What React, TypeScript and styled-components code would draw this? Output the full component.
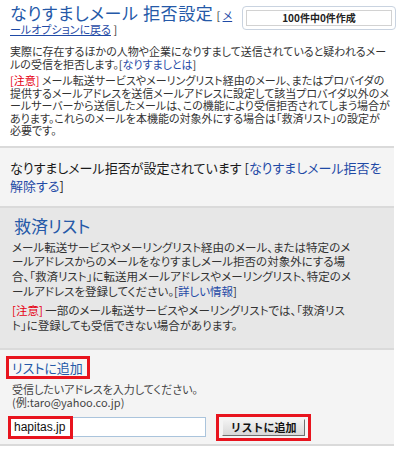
import React from 'react'
import styled, { createGlobalStyle } from 'styled-components'

const GlobalStyle = createGlobalStyle`
  body {
    margin: 0;
    background: #ffffff;
    font-family: "Noto Sans CJK JP", "Liberation Sans", sans-serif;
    font-feature-settings: "palt";
    color: #333333;
  }
`

const Page = styled.div`
  width: 394px;
`

const Header = styled.div`
  display: flex;
  align-items: flex-start;
  justify-content: space-between;
  padding: 2px 0 0 10px;
  height: 34px;
`

const TitleBlock = styled.div`
  width: 232px;
  font-size: 11px;
  line-height: 11px;
  color: #333;
`

const Title = styled.span`
  font-size: 17px;
  line-height: 22px;
  font-weight: normal;
  color: #2559a8;
  letter-spacing: 0.6px;
  margin-right: 3px;
`

const Link = styled.a<{ $underline?: boolean }>`
  color: #1f4aa6;
  text-decoration: ${(p) => (p.$underline ? 'underline' : 'none')};
  cursor: pointer;
`

const CountBox = styled.div`
  margin-top: 4px;
  padding: 3px;
  border: 1px solid #c9d3e0;
  border-radius: 4px;
  width: 146px;
  margin-right: -2px;
`

const CountInner = styled.div`
  border: 1px solid #d2d2d2;
  height: 14px;
  font-size: 10px;
  line-height: 14px;
  font-weight: bold;
  color: #222;
  text-align: center;
`

const Intro = styled.div`
  padding: 9px 6px 9px 10px;
`

const Para = styled.p<{ $gap?: number; $lh?: number; $size?: number }>`
  margin: 0 0 ${(p) => p.$gap ?? 0}px 0;
  font-size: ${(p) => p.$size ?? 11}px;
  line-height: ${(p) => p.$lh ?? 13}px;
  white-space: nowrap;
  color: #333;
`

const Warn = styled.span`
  color: #e60012;
`

const Section = styled.div<{ $bg: string }>`
  background: ${(p) => p.$bg};
  border-top: 2px solid #dadada;
`

const StatusBox = styled(Section)`
  padding: 11px 6px 11px 10px;
  font-size: 13px;
  line-height: 18px;
  white-space: nowrap;
  color: #1a1a1a;
`

const RescueBox = styled(Section)`
  padding: 7px 6px 15px 12px;
`

const SubTitle = styled.h2`
  margin: 0 0 3px 2px;
  font-size: 17px;
  line-height: 22px;
  font-weight: normal;
  color: #2559a8;
`

const AddBox = styled(Section)`
  padding: 4px 8px 3px 6px;
  border-bottom: 2px solid #dadada;
`

const Marked = styled.span`
  display: inline-block;
  border: 3px solid #e8141e;
  padding: 0 4px 0 3px;
  font-size: 13px;
  line-height: 17px;
  color: #2559a8;
  background: #f7f7f7;
`

const Help = styled.div`
  margin: 4px 0 0 6px;
  font-size: 11px;
  line-height: 13.5px;
  color: #444;
`

const FormRow = styled.div`
  display: flex;
  align-items: center;
  gap: 10px;
  margin: 4px 0 0 3px;
`

const FakeInput = styled.div`
  position: relative;
  width: 197px;
  height: 20px;
  border: 1px solid #aac4dc;
  background: #fff;
  box-sizing: border-box;
`

const InputMark = styled.span`
  position: absolute;
  left: -2px;
  top: -2px;
  height: 23px;
  padding: 0 5px 0 3px;
  border: 3px solid #e8141e;
  background: #fff;
  box-sizing: border-box;
  font-family: "Liberation Sans", Arial, sans-serif;
  font-size: 12px;
  line-height: 17px;
  color: #111;
`

const ButtonMark = styled.div`
  border: 3px solid #e8141e;
  padding: 2px 3px;
`

const Button = styled.button`
  display: block;
  width: 83px;
  height: 17px;
  padding: 0;
  border: 1px solid;
  border-color: #f4f4f4 #707070 #707070 #f4f4f4;
  background: linear-gradient(#f2f2f2, #d8d8d8);
  font-family: "Noto Sans CJK JP", sans-serif;
  font-size: 11px;
  font-weight: bold;
  line-height: 15px;
  color: #111;
`

export default function App() {
  return (
    <Page>
      <GlobalStyle />
      <Header>
        <TitleBlock>
          <Title>なりすましメール 拒否設定</Title>
          [ <Link $underline>メールオプションに戻る</Link> ]
        </TitleBlock>
        <CountBox>
          <CountInner>100件中0件作成</CountInner>
        </CountBox>
      </Header>

      <Intro>
        <Para $gap={3}>
          実際に存在するほかの人物や企業になりすまして送信されていると疑われるメー
          <br />
          ルの受信を拒否します。[<Link>なりすましとは</Link>]
        </Para>
        <Para $lh={12.5}>
          <Warn>[注意]</Warn> メール転送サービスやメーリングリスト経由のメール、またはプロバイダの
          <br />
          提供するメールアドレスを送信メールアドレスに設定して該当プロバイダ以外のメ
          <br />
          ールサーバーから送信したメールは、この機能により受信拒否されてしまう場合が
          <br />
          あります。これらのメールを本機能の対象外にする場合は「救済リスト」の設定が
          <br />
          必要です。
        </Para>
      </Intro>

      <StatusBox $bg="#f4f4f4">
        なりすましメール拒否が設定されています [<Link>なりすましメール拒否を
        <br />
        解除する</Link>]
      </StatusBox>

      <RescueBox $bg="#e7e7e7">
        <SubTitle>救済リスト</SubTitle>
        <Para $gap={5} $lh={14.7} $size={11.5}>
          メール転送サービスやメーリングリスト経由のメール、または特定のメ
          <br />
          ールアドレスからのメールをなりすましメール拒否の対象外にする場
          <br />
          合、「救済リスト」に転送用メールアドレスやメーリングリスト、特定のメ
          <br />
          ールアドレスを登録してください。[<Link>詳しい情報</Link>]
        </Para>
        <Para $lh={14.7} $size={11.5}>
          <Warn>[注意]</Warn> 一部のメール転送サービスやメーリングリストでは、「救済リス
          <br />
          ト」に登録しても受信できない場合があります。
        </Para>
      </RescueBox>

      <AddBox $bg="#f4f4f4">
        <Marked>リストに追加</Marked>
        <Help>
          受信したいアドレスを入力してください。
          <br />
          (例:taro@yahoo.co.jp)
        </Help>
        <FormRow>
          <FakeInput>
            <InputMark>hapitas.jp</InputMark>
          </FakeInput>
          <ButtonMark>
            <Button type="button">リストに追加</Button>
          </ButtonMark>
        </FormRow>
      </AddBox>
    </Page>
  )
}
